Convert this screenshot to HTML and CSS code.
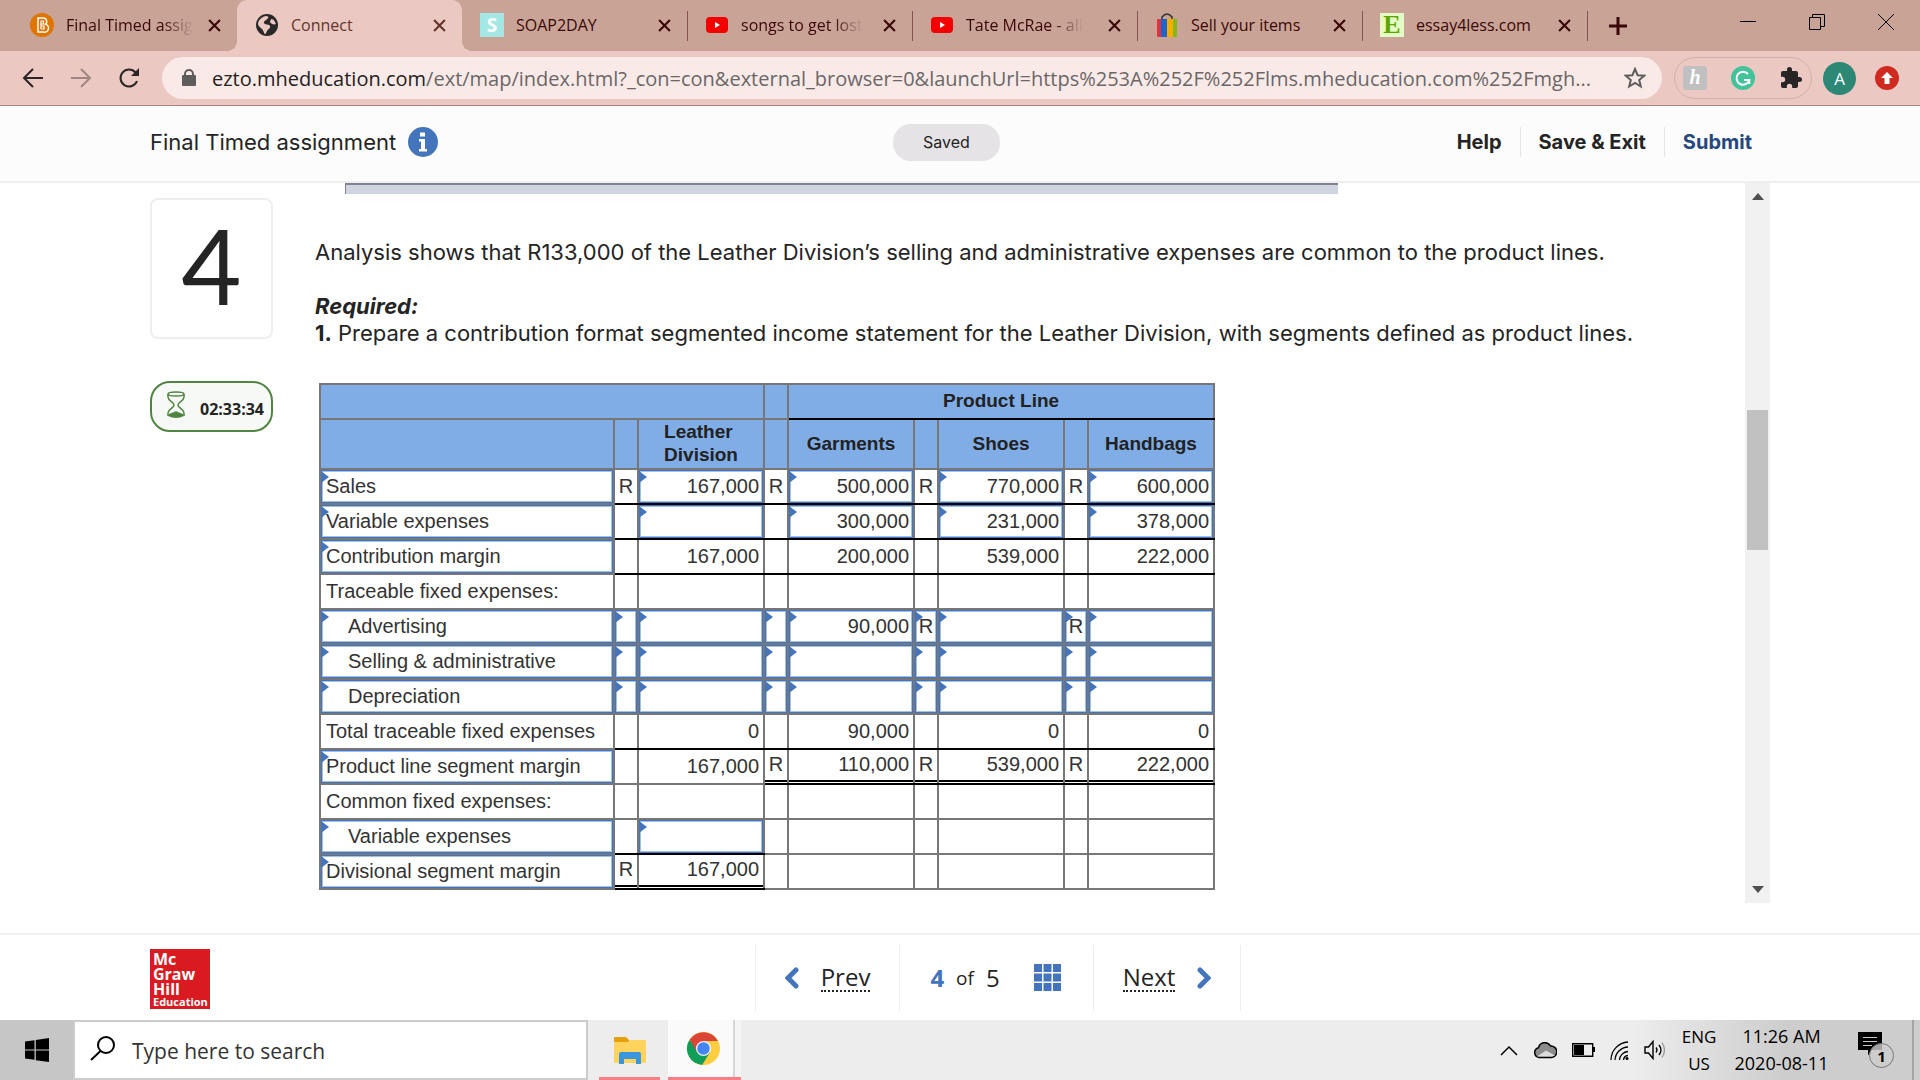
FILE: index.html
```html
<!DOCTYPE html>
<html lang="en">
<head>
    <meta charset="UTF-8">
    <meta name="viewport" content="width=device-width, initial-scale=1.0">
    <title>Connect</title>
    <link rel="stylesheet" href="styles.css">
</head>
<body>

    <!-- Browser tabs -->
    <div class="tabstrip">
        <div class="tab">
            <svg class="favicon" viewBox="0 0 24 24"><circle cx="12" cy="12" r="12" fill="#e07400"/><path d="M8 5h5.500a3.500 3.500 0 0 1 2 6.200a4 4 0 0 1-2 7.800H8z" fill="none" stroke="#fff" stroke-width="1.500"/><path d="M11 8v8M11 8h2.500v3H11M11 13h3v3h-3" fill="none" stroke="#fff" stroke-width="1.200"/></svg>
            <span class="tab-title fade">Final Timed assig</span>
            <button class="tab-close" aria-label="Close"><svg viewBox="0 0 12 12"><path d="M1 1l10 10M11 1L1 11"/></svg></button>
        </div>
        <div class="tab active">
            <svg class="favicon" viewBox="0 0 24 24"><circle cx="12" cy="12" r="11" fill="#292929"/><path d="M11 3c4 0 2 3 0 4s-3 3-1 4 4 0 5 2-2 3-3 5-1 3-2 3-1-3-3-5-4-3-4-5 2-7 8-8zM16 6c3 0 4 3 5 5-2 1-5 0-6-2z" fill="#ebc9c2"/></svg>
            <span class="tab-title">Connect</span>
            <button class="tab-close" aria-label="Close"><svg viewBox="0 0 12 12"><path d="M1 1l10 10M11 1L1 11"/></svg></button>
        </div>
        <div class="tab">
            <span class="favicon fav-soap">S</span>
            <span class="tab-title">SOAP2DAY</span>
            <button class="tab-close" aria-label="Close"><svg viewBox="0 0 12 12"><path d="M1 1l10 10M11 1L1 11"/></svg></button>
        </div>
        <div class="tab divided">
            <svg class="favicon" viewBox="0 0 24 24"><rect x="1" y="4" width="22" height="16" rx="4" fill="#f40000"/><path d="M10 9l5 3-5 3z" fill="#fff"/></svg>
            <span class="tab-title fade">songs to get lost</span>
            <button class="tab-close" aria-label="Close"><svg viewBox="0 0 12 12"><path d="M1 1l10 10M11 1L1 11"/></svg></button>
        </div>
        <div class="tab divided">
            <svg class="favicon" viewBox="0 0 24 24"><rect x="1" y="4" width="22" height="16" rx="4" fill="#f40000"/><path d="M10 9l5 3-5 3z" fill="#fff"/></svg>
            <span class="tab-title fade">Tate McRae - all</span>
            <button class="tab-close" aria-label="Close"><svg viewBox="0 0 12 12"><path d="M1 1l10 10M11 1L1 11"/></svg></button>
        </div>
        <div class="tab divided">
            <svg class="favicon" viewBox="0 0 24 24"><path d="M7 7V4q5-6 10 0v3" fill="none" stroke="#333" stroke-width="1.500"/><path d="M2 6h4v18H3q-1 0-1-1z" fill="#e53238"/><path d="M6 6h6v18H6z" fill="#1e63d2"/><path d="M12 6h6v18h-6z" fill="#f5af02"/><path d="M18 6h4v17q0 1-1 1h-3z" fill="#86b817"/></svg>
            <span class="tab-title">Sell your items</span>
            <button class="tab-close" aria-label="Close"><svg viewBox="0 0 12 12"><path d="M1 1l10 10M11 1L1 11"/></svg></button>
        </div>
        <div class="tab divided">
            <span class="favicon fav-essay">E</span>
            <span class="tab-title">essay4less.com</span>
            <button class="tab-close" aria-label="Close"><svg viewBox="0 0 12 12"><path d="M1 1l10 10M11 1L1 11"/></svg></button>
        </div>
        <button class="new-tab divided" aria-label="New tab"><svg width="18" height="18" viewBox="0 0 18 18"><path d="M9 0v18M0 9h18"/></svg></button>
        <div class="window-controls">
            <button aria-label="Minimize"><svg width="16" height="16" viewBox="0 0 16 16"><path d="M0 7.500h16"/></svg></button>
            <button aria-label="Restore"><svg width="16" height="16" viewBox="0 0 16 16"><path d="M.5 3.500h11v12H.5zM3.500 3.500v-3h12v12h-4"/></svg></button>
            <button aria-label="Close window"><svg width="16" height="16" viewBox="0 0 16 16"><path d="M0 0l16 16M16 0L0 16"/></svg></button>
        </div>
    </div>

    <!-- Address bar -->
    <div class="toolbar">
        <div class="nav-buttons">
            <button aria-label="Back"><svg width="22" height="22" viewBox="0 0 22 22"><path d="M21 11H3M11 2l-9 9 9 9" stroke="#2b2625"/></svg></button>
            <button aria-label="Forward"><svg width="22" height="22" viewBox="0 0 22 22"><path d="M1 11h18M11 2l9 9-9 9" stroke="#a08682"/></svg></button>
            <button aria-label="Reload"><svg width="22" height="22" viewBox="0 0 22 22"><path d="M19 14a8.500 8.500 0 1 1-1.500-8.500" stroke="#2b2625"/><path d="M21 1v8h-8z" fill="#2b2625"/></svg></button>
        </div>
        <div class="omnibox">
            <svg width="14" height="18" viewBox="0 0 14 18"><rect x="0" y="6" width="14" height="11" rx="1" fill="#5f5c5c"/><path d="M3 7V5a4 4 0 0 1 8 0v2" fill="none" stroke="#5f5c5c" stroke-width="2"/></svg>
            <div class="url" role="textbox" aria-label="Address"><span class="host">ezto.mheducation.com</span>/ext/map/index.html?_con=con&amp;external_browser=0&amp;launchUrl=https%253A%252F%252Flms.mheducation.com%252Fmgh...</div>
            <button class="star" aria-label="Bookmark"><svg width="22" height="22" viewBox="0 0 22 22"><path d="M11 2l2.600 6.200 6.600.5-5 4.300 1.600 6.500-5.800-3.500-5.800 3.500 1.600-6.500-5-4.300 6.600-.5z" fill="none" stroke="#5f5c5c" stroke-width="2"/></svg></button>
        </div>
        <div class="extensions">
            <span class="ext-honey">h</span>
            <svg width="24" height="24" viewBox="0 0 24 24"><circle cx="12" cy="12" r="12" fill="#43c39a"/><path d="M17 8a6.500 6.500 0 1 0 1.300 6H13M18.300 14v4" fill="none" stroke="#fff" stroke-width="2"/></svg>
            <svg width="24" height="24" viewBox="0 0 24 24"><path d="M20.500 11H19V7a2 2 0 0 0-2-2h-4V3.500a2.500 2.500 0 0 0-5 0V5H4a2 2 0 0 0-2 2v3.800h1.500a2.700 2.700 0 0 1 0 5.400H2V20a2 2 0 0 0 2 2h3.800v-1.500a2.700 2.700 0 0 1 5.400 0V22H17a2 2 0 0 0 2-2v-4h1.500a2.500 2.500 0 0 0 0-5z" fill="#292524"/></svg>
        </div>
        <button class="profile">A</button>
        <button class="update" aria-label="Update"><svg width="24" height="24" viewBox="0 0 24 24"><circle cx="12" cy="12" r="12" fill="#d02a20"/><path d="M12 6l6 6h-3.500v6h-5v-6H6z" fill="#fff"/></svg></button>
    </div>

    <!-- Assignment header -->
    <header class="header">
        <div class="title">
            <span>Final Timed assignment</span>
            <svg width="30" height="30" viewBox="0 0 30 30"><circle cx="15" cy="15" r="15" fill="#4475bc"/><path d="M12 5.500h5v4h-5zM11 12h6v10h2v2.500h-8V22h2v-7.500h-2z" fill="#fff"/></svg>
        </div>
        <span class="saved">Saved</span>
        <nav class="header-links">
            <a href="#">Help</a>
            <a href="#">Save &amp; Exit</a>
            <a href="#" class="submit">Submit</a>
        </nav>
    </header>

    <main class="main">
        <aside class="side">
            <div class="question-number">4</div>
            <div class="timer">
                <svg width="18" height="28" viewBox="0 0 18 28"><path d="M1 3v3c0 4 6 5 6 8s-6 4-6 8v3M17 3v3c0 4-6 5-6 8s6 4 6 8v3" fill="none" stroke="#508541" stroke-width="1.500"/><ellipse cx="9" cy="3" rx="8" ry="2" fill="none" stroke="#508541" stroke-width="1.500"/><path d="M1 25c0-3 5-3 8-5 3 2 8 2 8 5q-8 4-16 0z" fill="#508541"/></svg>
                <span>02:33:34</span>
            </div>
        </aside>

        <section class="question">
            <div class="previous-table"></div>
            <p>Analysis shows that R133,000 of the Leather Division’s selling and administrative expenses are common to the product lines.</p>
            <p><b><i>Required:</i></b><br><b>1.</b> Prepare a contribution format segmented income statement for the Leather Division, with segments defined as product lines.</p>

            <table class="statement">
                <colgroup>
                    <col class="c-label">
                    <col class="c-sign"><col class="c-amount">
                    <col class="c-sign"><col class="c-amount">
                    <col class="c-sign"><col class="c-amount">
                    <col class="c-sign"><col class="c-amount">
                </colgroup>
                <thead>
                    <tr>
                        <th colspan="3"></th>
                        <th></th>
                        <th colspan="5" class="line">Product Line</th>
                    </tr>
                    <tr class="tall">
                        <th></th>
                        <th></th>
                        <th>Leather&nbsp;<br>Division</th>
                        <th></th>
                        <th>Garments</th>
                        <th></th>
                        <th>Shoes</th>
                        <th></th>
                        <th>Handbags</th>
                    </tr>
                </thead>
                <tbody>
                    <tr>
                        <td class="entry"><input type="text" aria-label="Line item 1" value="Sales"></td>
                        <td class="sign line">R</td>
                        <td class="entry line"><input class="num" type="text" aria-label="Sales, Leather Division" value="167,000"></td>
                        <td class="sign line">R</td>
                        <td class="entry line"><input class="num" type="text" aria-label="Sales, Garments" value="500,000"></td>
                        <td class="sign line">R</td>
                        <td class="entry line"><input class="num" type="text" aria-label="Sales, Shoes" value="770,000"></td>
                        <td class="sign line">R</td>
                        <td class="entry line"><input class="num" type="text" aria-label="Sales, Handbags" value="600,000"></td>
                    </tr>
                    <tr>
                        <td class="entry"><input type="text" aria-label="Line item 2" value="Variable expenses"></td>
                        <td class="line"></td>
                        <td class="entry line"><input class="num" type="text" aria-label="Variable expenses, Leather Division"></td>
                        <td class="line"></td>
                        <td class="entry line"><input class="num" type="text" aria-label="Variable expenses, Garments" value="300,000"></td>
                        <td class="line"></td>
                        <td class="entry line"><input class="num" type="text" aria-label="Variable expenses, Shoes" value="231,000"></td>
                        <td class="line"></td>
                        <td class="entry line"><input class="num" type="text" aria-label="Variable expenses, Handbags" value="378,000"></td>
                    </tr>
                    <tr>
                        <td class="entry"><input type="text" aria-label="Line item 3" value="Contribution margin"></td>
                        <td class="line"></td>
                        <td class="amount line">167,000</td>
                        <td class="line"></td>
                        <td class="amount line">200,000</td>
                        <td class="line"></td>
                        <td class="amount line">539,000</td>
                        <td class="line"></td>
                        <td class="amount line">222,000</td>
                    </tr>
                    <tr>
                        <td class="label">Traceable fixed expenses:</td>
                        <td></td><td></td><td></td><td></td><td></td><td></td><td></td><td></td>
                    </tr>
                    <tr>
                        <td class="entry"><input class="indent" type="text" aria-label="Line item 4" value="Advertising"></td>
                        <td class="entry"><input class="unit" type="text" aria-label="Advertising currency, Leather Division"></td>
                        <td class="entry"><input class="num" type="text" aria-label="Advertising, Leather Division"></td>
                        <td class="entry"><input class="unit" type="text" aria-label="Advertising currency, Garments"></td>
                        <td class="entry"><input class="num" type="text" aria-label="Advertising, Garments" value="90,000"></td>
                        <td class="entry"><input class="unit" type="text" aria-label="Advertising currency, Shoes" value="R"></td>
                        <td class="entry"><input class="num" type="text" aria-label="Advertising, Shoes"></td>
                        <td class="entry"><input class="unit" type="text" aria-label="Advertising currency, Handbags" value="R"></td>
                        <td class="entry"><input class="num" type="text" aria-label="Advertising, Handbags"></td>
                    </tr>
                    <tr>
                        <td class="entry"><input class="indent" type="text" aria-label="Line item 5" value="Selling &amp; administrative"></td>
                        <td class="entry"><input class="unit" type="text" aria-label="Selling currency, Leather Division"></td>
                        <td class="entry"><input class="num" type="text" aria-label="Selling, Leather Division"></td>
                        <td class="entry"><input class="unit" type="text" aria-label="Selling currency, Garments"></td>
                        <td class="entry"><input class="num" type="text" aria-label="Selling, Garments"></td>
                        <td class="entry"><input class="unit" type="text" aria-label="Selling currency, Shoes"></td>
                        <td class="entry"><input class="num" type="text" aria-label="Selling, Shoes"></td>
                        <td class="entry"><input class="unit" type="text" aria-label="Selling currency, Handbags"></td>
                        <td class="entry"><input class="num" type="text" aria-label="Selling, Handbags"></td>
                    </tr>
                    <tr>
                        <td class="entry"><input class="indent" type="text" aria-label="Line item 6" value="Depreciation"></td>
                        <td class="entry"><input class="unit" type="text" aria-label="Depreciation currency, Leather Division"></td>
                        <td class="entry"><input class="num" type="text" aria-label="Depreciation, Leather Division"></td>
                        <td class="entry"><input class="unit" type="text" aria-label="Depreciation currency, Garments"></td>
                        <td class="entry"><input class="num" type="text" aria-label="Depreciation, Garments"></td>
                        <td class="entry"><input class="unit" type="text" aria-label="Depreciation currency, Shoes"></td>
                        <td class="entry"><input class="num" type="text" aria-label="Depreciation, Shoes"></td>
                        <td class="entry"><input class="unit" type="text" aria-label="Depreciation currency, Handbags"></td>
                        <td class="entry"><input class="num" type="text" aria-label="Depreciation, Handbags"></td>
                    </tr>
                    <tr>
                        <td class="label">Total traceable fixed expenses</td>
                        <td class="line"></td>
                        <td class="amount line">0</td>
                        <td class="line"></td>
                        <td class="amount line">90,000</td>
                        <td class="line"></td>
                        <td class="amount line">0</td>
                        <td class="line"></td>
                        <td class="amount line">0</td>
                    </tr>
                    <tr>
                        <td class="entry"><input type="text" aria-label="Line item 7" value="Product line segment margin"></td>
                        <td></td>
                        <td class="amount">167,000</td>
                        <td class="sign line total">R</td>
                        <td class="amount line total">110,000</td>
                        <td class="sign line total">R</td>
                        <td class="amount line total">539,000</td>
                        <td class="sign line total">R</td>
                        <td class="amount line total">222,000</td>
                    </tr>
                    <tr>
                        <td class="label">Common fixed expenses:</td>
                        <td></td><td></td><td></td><td></td><td></td><td></td><td></td><td></td>
                    </tr>
                    <tr>
                        <td class="entry"><input class="indent" type="text" aria-label="Line item 8" value="Variable expenses"></td>
                        <td class="line"></td>
                        <td class="entry line"><input class="num" type="text" aria-label="Common expenses, Leather Division"></td>
                        <td></td><td></td><td></td><td></td><td></td><td></td>
                    </tr>
                    <tr>
                        <td class="entry"><input type="text" aria-label="Line item 9" value="Divisional segment margin"></td>
                        <td class="sign line total">R</td>
                        <td class="amount line total">167,000</td>
                        <td></td><td></td><td></td><td></td><td></td><td></td>
                    </tr>
                </tbody>
            </table>
        </section>

        <div class="scrollbar">
            <svg width="12" height="7" viewBox="0 0 12 7"><path d="M6 0l6 7H0z" fill="#505050"/></svg>
            <div class="track"><div class="thumb"></div></div>
            <svg width="12" height="7" viewBox="0 0 12 7"><path d="M6 7l6-7H0z" fill="#505050"/></svg>
        </div>
    </main>

    <footer class="footer">
        <div class="logo">
            <span>Mc<br>Graw<br>Hill</span>
            <small>Education</small>
        </div>
        <nav class="pager">
            <a href="#" class="step">
                <svg width="14" height="22" viewBox="0 0 14 22"><path d="M11 3l-8 8 8 8" fill="none" stroke="#4475bc" stroke-width="5" stroke-linecap="round"/></svg>
                <span>Prev</span>
            </a>
            <div class="position">
                <b>4</b><span class="of">of</span><span>5</span>
                <svg width="27" height="27" viewBox="0 0 27 27"><path d="M0 0h8v8H0zM9.500 0h8v8h-8zM19 0h8v8h-8zM0 9.500h8v8H0zM9.500 9.500h8v8h-8zM19 9.500h8v8h-8zM0 19h8v8H0zM9.500 19h8v8h-8zM19 19h8v8h-8z" fill="#4475bc"/></svg>
            </div>
            <a href="#" class="step">
                <span>Next</span>
                <svg width="14" height="22" viewBox="0 0 14 22"><path d="M3 3l8 8-8 8" fill="none" stroke="#4475bc" stroke-width="5" stroke-linecap="round"/></svg>
            </a>
        </nav>
    </footer>

    <!-- Windows taskbar -->
    <div class="taskbar">
        <button class="start" aria-label="Start"><svg width="24" height="24" viewBox="0 0 24 24"><path d="M0 3.500l9.500-1.300v9.300H0zM10.800 2L24 0v11.500H10.800zM0 12.600h9.500v9.200L0 20.500zM10.800 12.600H24V24l-13.200-1.800z"/></svg></button>
        <label class="search">
            <svg width="25" height="25" viewBox="0 0 25 25"><circle cx="16" cy="9" r="8" fill="none" stroke="#000" stroke-width="2"/><path d="M10.500 15L1 24" stroke="#000" stroke-width="2"/></svg>
            <input type="text" placeholder="Type here to search" aria-label="Type here to search">
        </label>
        <button class="app" aria-label="File Explorer"><svg width="32" height="28" viewBox="0 0 32 28"><path d="M0 1q0-1 1-1h11l3 3v5H0z" fill="#e5a00d"/><path d="M0 5h14l2-2h15q1 0 1 1v21q0 1-1 1H0z" fill="#ffd35c"/><path d="M5 27V17q0-2 2-2h18q2 0 2 2v10h-5v-5H10v5z" fill="#3a96dd"/></svg></button>
        <button class="app current" aria-label="Chrome"><svg width="33" height="33" viewBox="0 0 48 48"><circle cx="24" cy="24" r="24" fill="#ffcd40"/><path d="M3.200 12A24 24 0 0 0 22 48L33.500 29.500 24 24z" fill="#0f9d58"/><path d="M24 24L14.500 29.500 4 11A24 24 0 0 1 45 13H24z" fill="#db4437"/><circle cx="24" cy="24" r="11" fill="#f1f1f1"/><circle cx="24" cy="24" r="9" fill="#4285f4"/></svg></button>
        <div class="tray">
            <svg width="18" height="11" viewBox="0 0 18 11"><path d="M1 10l8-8 8 8" fill="none" stroke="#000" stroke-width="1.500"/></svg>
            <svg width="24" height="18" viewBox="0 0 24 18"><path d="M6 16.500a5 5 0 0 1-.5-9.800A6.500 6.500 0 0 1 17.500 5a5.500 5.500 0 0 1 1 11.500z" fill="#8c8c8c" stroke="#000" stroke-width="1.500"/><path d="M4 15.500l9-6 9 5-3 1z" fill="#dcdcdc"/></svg>
            <svg width="23" height="14" viewBox="0 0 23 14"><path d="M.7.700h20v12.600H.7z" fill="none" stroke="#000" stroke-width="1.400"/><path d="M2 2h10v10H2zM21 4h2v5h-2z"/></svg>
            <svg width="19" height="19" viewBox="0 0 19 19"><path d="M1 19A18 18 0 0 1 18 1M5 19A13.500 13.500 0 0 1 18 6M9.500 19A9 9 0 0 1 18 10.500M13.500 19a5 5 0 0 1 4.500-4.500" fill="none" stroke="#000" stroke-width="1.300"/><circle cx="17" cy="17.500" r="1.500"/></svg>
            <svg width="22" height="20" viewBox="0 0 22 20"><path d="M1 7h3.500l4.500-5.500v17L4.500 13H1z" fill="none" stroke="#000" stroke-width="1.400"/><path d="M12 7.500q2 2.500 0 5M15 5q4 5 0 10" fill="none" stroke="#000" stroke-width="1.300"/><path d="M18 2.500q5 7.500 0 15" fill="none" stroke="#999" stroke-width="1.300"/></svg>
            <div class="lang">ENG<br>US</div>
            <div class="clock">11:26 AM<br>2020-08-11</div>
            <button class="notifications" aria-label="Notifications">
                <svg width="24" height="24" viewBox="0 0 24 24"><path d="M0 0h24v18H14l-4 5.500V18H0z"/><path d="M5 5.500h14M5 9.500h14M5 13.500h9" stroke="#ccc"/></svg>
                <span class="count">1</span>
            </button>
        </div>
    </div>

</body>
</html>
```
FILE: styles.css
```css
* {
    box-sizing: border-box;
}
body {
    display: flex;
    flex-direction: column;
    height: 100vh;
    margin: 0;
    overflow: hidden;
    font-family: "Open Sans", "Noto Sans", sans-serif;
    color: #242424;
    background-color: #fff;
}
button {
    display: flex;
    align-items: center;
    justify-content: center;
    padding: 0;
    border: 0;
    background: none;
    font-family: inherit;
}
svg {
    display: block;
    flex: none;
}
a {
    color: inherit;
    text-decoration: none;
}

/* Browser tabs */
.tabstrip {
    display: flex;
    flex: none;
    height: 51px;
    padding-left: 12px;
    background-color: #c9a396;
    color: #3b0808;
}
.tab {
    position: relative;
    display: flex;
    align-items: center;
    flex: 0 1 225px;
    min-width: 0;
    padding: 0 16px 1px 18px;
    font-size: 16px;
}
.tab.active {
    background-color: #ebc9c2;
    border-radius: 10px 10px 0 0;
    color: #63352c;
}
.tab.active::before,
.tab.active::after {
    content: "";
    position: absolute;
    bottom: 0;
    width: 10px;
    height: 10px;
}
.tab.active::before {
    left: -10px;
    background: radial-gradient(circle at 0 0, transparent 10px, #ebc9c2 10px);
}
.tab.active::after {
    right: -10px;
    background: radial-gradient(circle at 100% 0, transparent 10px, #ebc9c2 10px);
}
.divided::before {
    content: "";
    position: absolute;
    left: 0;
    top: 11px;
    width: 1px;
    height: 30px;
    background-color: #86544c;
}
.favicon {
    flex: none;
    width: 24px;
    height: 24px;
    margin-right: 12px;
    text-align: center;
    line-height: 24px;
    font-weight: bold;
}
.fav-soap {
    background-color: #a3e8e4;
    color: #fff;
    font-size: 19px;
}
.fav-essay {
    background-color: #e4fbc5;
    color: #5ea500;
    font-family: "Liberation Serif", serif;
    font-size: 26px;
}
.tab-title {
    margin-right: auto;
    white-space: nowrap;
}
.fade {
    mask-image: linear-gradient(to right, #000 calc(100% - 30px), transparent);
}
.tab-close svg {
    width: 13px;
    height: 13px;
    stroke: currentColor;
    stroke-width: 2;
}
.tab-close {
    color: inherit;
}
.new-tab {
    position: relative;
    width: 62px;
}
.new-tab svg {
    stroke: #3b0808;
    stroke-width: 3;
}
.window-controls {
    display: flex;
    height: 43px;
    margin-left: auto;
}
.window-controls button {
    width: 69px;
}
.window-controls svg {
    fill: none;
    stroke: #000;
}

/* Address bar */
.toolbar {
    display: flex;
    align-items: center;
    flex: none;
    height: 55px;
    padding: 0 21px 0 22px;
    background-color: #ebc9c2;
    border-bottom: 1px solid #a88582;
}
.nav-buttons {
    display: flex;
    gap: 26px;
    margin-right: 22px;
}
.nav-buttons svg {
    fill: none;
    stroke-width: 2;
}
.omnibox {
    display: flex;
    align-items: center;
    flex: 1;
    min-width: 0;
    height: 42px;
    padding: 0 16px 0 20px;
    border-radius: 21px;
    background-color: #f9eae8;
}
.url {
    flex: 1;
    overflow: hidden;
    margin-left: 16px;
    color: #6b6767;
    font-size: 20px;
    white-space: nowrap;
}
.host {
    color: #242222;
}
.extensions {
    display: flex;
    align-items: center;
    gap: 24px;
    height: 42px;
    margin-left: 12px;
    padding: 0 8px;
    border: 1px solid #d3b0aa;
    border-radius: 21px;
}
.ext-honey {
    width: 24px;
    height: 24px;
    border-radius: 3px;
    background-color: #c0c0c0;
    color: #fff;
    font: italic bold 20px/22px "Liberation Serif", serif;
    text-align: center;
}
.profile {
    width: 33px;
    height: 33px;
    margin: 0 19px 0 11px;
    border-radius: 50%;
    background-color: #2c8775;
    color: #fff;
    font-size: 17px;
}

/* Assignment header */
.header {
    display: flex;
    align-items: center;
    justify-content: space-between;
    flex: none;
    height: 77px;
    padding: 0 150px 3px;
    border-bottom: 2px solid #efefef;
    background-color: #fcfcfc;
    font-family: Inter, sans-serif;
}
.title {
    display: flex;
    align-items: center;
    gap: 12px;
    font-size: 22px;
}
.saved {
    margin-left: 16px;
    padding: 0 30px;
    border-radius: 18px;
    background-color: #e5e3e5;
    font-size: 16px;
    line-height: 37px;
}
.header-links {
    display: flex;
    font-size: 20px;
    font-weight: bold;
    line-height: 30px;
}
.header-links a {
    padding: 0 18px;
}
.header-links a + a {
    border-left: 1px solid #e6e6e6;
}
.header-links .submit {
    color: #25477f;
}

/* Question */
.main {
    display: flex;
    flex: 1;
    min-height: 0;
    padding: 0 150px 30px;
    font-family: Inter, sans-serif;
}
.side {
    flex: none;
    width: 123px;
    margin-right: 42px;
    padding-top: 15px;
}
.question-number {
    height: 141px;
    border: 2px solid #eee;
    border-radius: 8px;
    font-family: Lato, sans-serif;
    font-size: 104px;
    line-height: 130px;
    text-align: center;
}
.timer {
    display: flex;
    align-items: center;
    justify-content: space-between;
    height: 51px;
    margin-top: 42px;
    padding: 0 7px 0 15px;
    border: 2px solid #508541;
    border-radius: 20px;
    background-color: #f6f9f6;
    font-family: "Open Sans", sans-serif;
    font-size: 16px;
    font-weight: bold;
}
.timer svg {
    margin-bottom: 4px;
}
.timer span {
    padding-top: 4px;
}
.question {
    flex: 1;
    min-width: 0;
    overflow: hidden;
}
.previous-table {
    width: 993px;
    height: 11px;
    margin: 0 0 45px 30px;
    border: solid #80838f;
    border-width: 2px 0 0 1px;
    background-color: #cfd4e0;
}
.question p {
    margin: 0 0 27px;
    font-size: 22px;
    line-height: 27px;
}

/* Income statement */
.statement {
    width: 894px;
    margin: 36px 0 0 4px;
    border-collapse: collapse;
    table-layout: fixed;
    color: #333;
    font-family: "Liberation Sans", Arial, sans-serif;
    font-size: 20px;
    line-height: 23px;
}
.c-label {
    width: 294px;
}
.c-sign {
    width: 24px;
}
.c-amount {
    width: 126px;
}
.statement tr {
    height: 35px;
}
.statement .tall {
    height: 50px;
}
.statement th,
.statement td {
    position: relative;
    padding: 0;
    border: 2px solid #777;
}
.statement th {
    padding-bottom: 2px;
    background-color: #80ade6;
    color: #222;
    font-size: 19px;
}
.statement .line {
    border-bottom-color: #000;
}
.statement .label {
    padding-left: 5px;
}
.statement .amount {
    padding-right: 4px;
    text-align: right;
}
.statement .sign {
    text-align: center;
}
/* second rule of the double underline */
.statement .total {
    padding-bottom: 4px;
    box-shadow: inset 0 -1px #fff, inset 0 -3px #000;
}
.entry {
    box-shadow: inset 0 0 0 1px #4475bc, inset 0 0 0 2px #a3c0e8;
}
.entry::before {
    content: "";
    position: absolute;
    top: 1px;
    left: 0;
    width: 8px;
    height: 12px;
    background-color: #4475bc;
    clip-path: polygon(0 0, 100% 50%, 0 100%);
}
.entry input {
    position: relative;
    display: block;
    width: 100%;
    height: 33px;
    padding: 0 4px 0 5px;
    border: 0;
    outline: 0;
    background: none;
    color: inherit;
    font: inherit;
}
.entry .num {
    text-align: right;
}
.entry .unit {
    padding: 0;
    text-align: center;
}
.entry .indent {
    padding-left: 27px;
}

/* Scrollbar */
.scrollbar {
    display: flex;
    flex-direction: column;
    align-items: center;
    width: 25px;
    padding: 10px 0;
    background-color: #f1f1f1;
}
.track {
    flex: 1;
    width: 21px;
}
.thumb {
    height: 140px;
    margin-top: 210px;
    background-color: #c1c1c1;
}

/* Footer */
.footer {
    display: flex;
    align-items: center;
    flex: none;
    height: 87px;
    padding: 0 150px;
    border-top: 2px solid #f1f1f1;
}
.logo {
    width: 60px;
    height: 60px;
    margin: 2px 16px 0 0;
    padding: 3px;
    background-color: #da1a21;
    color: #fff;
    font-family: "Open Sans", sans-serif;
    font-size: 16px;
    font-weight: bold;
    line-height: 15px;
}
.logo small {
    display: block;
    font-size: 11px;
    line-height: 10px;
}
.pager {
    display: flex;
    margin: 0 auto;
    border-right: 1px solid #eee;
    font-size: 24px;
}
.step,
.position {
    display: flex;
    align-items: center;
    height: 66px;
    border-left: 1px solid #eee;
}
.step {
    gap: 22px;
    padding: 0 29px;
}
.step span {
    border-bottom: 2px dotted #242424;
    line-height: 26px;
}
.position {
    gap: 12px;
    padding: 0 32px 0 30px;
}
.position b {
    color: #4475bc;
}
.position .of {
    font-size: 19px;
}
.position svg {
    margin-left: 22px;
}

/* Windows taskbar */
.taskbar {
    display: flex;
    flex: none;
    height: 60px;
    background: linear-gradient(to right, #ededed 85%, #cdcdcd 93%, #cdcdcd);
}
.start {
    width: 73px;
    background-color: #c6c6c6;
}
.search {
    display: flex;
    align-items: center;
    width: 515px;
    padding-left: 15px;
    border: 2px solid #ccc;
    background-color: #fff;
}
.search svg {
    margin-bottom: 4px;
}
.search input {
    flex: 1;
    min-width: 0;
    margin-left: 17px;
    padding: 2px 0 0;
    border: 0;
    outline: 0;
    font: inherit;
    font-size: 21px;
}
.search input::placeholder {
    color: #333;
}
.app {
    width: 61px;
    margin-left: 11px;
    padding-top: 4px;
    border-bottom: 3px solid #fb7e87;
}
.app.current {
    width: 73px;
    margin-left: 8px;
    padding: 0 3px 0 0;
    background: linear-gradient(to right, #fafafa 65px, #d6d6d6 65px, #d6d6d6 67px, #f4f4f4 67px);
}
.tray {
    display: flex;
    align-items: center;
    gap: 15px;
    margin: 0 6px 0 auto;
    padding-right: 18px;
    border-right: 2px solid #a5a5a5;
    color: #000;
    font-size: 17px;
    line-height: 27px;
    text-align: center;
}
.lang {
    width: 36px;
}
.clock {
    width: 99px;
    font-size: 18px;
}
.notifications {
    position: relative;
    width: 36px;
    height: 36px;
    align-items: flex-start;
    justify-content: flex-start;
    margin-left: 12px;
}
.count {
    position: absolute;
    right: 0;
    bottom: 0;
    width: 25px;
    height: 25px;
    border: 1px solid #777;
    border-radius: 50%;
    background-color: rgba(205, 205, 205, 0.8);
    font-size: 15px;
    font-weight: bold;
    line-height: 24px;
}
```
